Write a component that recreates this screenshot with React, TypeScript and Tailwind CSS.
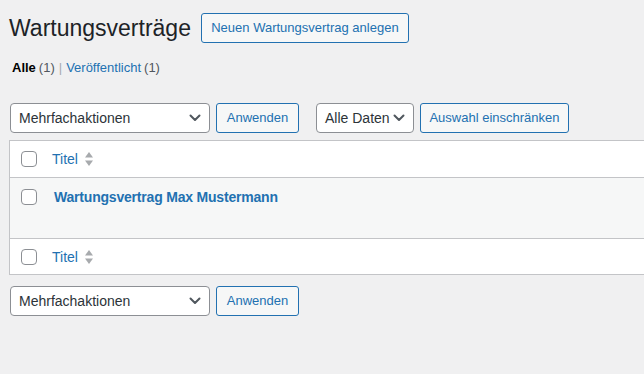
import React from "react";

const font = { fontFamily: '"Liberation Sans", Arial, sans-serif' };

function Chevron() {
  return (
    <svg width="12" height="8" viewBox="0 0 12 8" className="shrink-0">
      <path d="M1.5 1.5 L6 6 L10.5 1.5" fill="none" stroke="#50575e" strokeWidth="2" strokeLinecap="round" strokeLinejoin="round" />
    </svg>
  );
}

function Select({ label, w }: { label: string; w: string }) {
  return (
    <div className={`${w} h-[30px] flex items-center justify-between pl-[8px] pr-[8px] bg-white border border-[#8c8f94] rounded-[4px] text-[14px] text-[#2c3338]`}>
      <span>{label}</span>
      <Chevron />
    </div>
  );
}

function Btn({ label, w }: { label: string; w: string }) {
  return (
    <div className={`${w} h-[30px] flex items-center justify-center bg-[#f6f7f7] border border-[#2271b1] rounded-[3px] text-[13px] text-[#2271b1]`}>
      {label}
    </div>
  );
}

function Checkbox() {
  return <div className="w-[16px] h-[16px] border border-[#8c8f94] rounded-[4px] bg-white shrink-0" />;
}

function SortIcon() {
  return (
    <svg width="10" height="16" viewBox="0 0 10 16" className="ml-[6px]">
      <path d="M5 1 L9 6.5 L1 6.5 Z" fill="#a7aaad" />
      <path d="M5 15 L9 9.5 L1 9.5 Z" fill="#a7aaad" />
    </svg>
  );
}

function HeadRow({ h, border }: { h: string; border: string }) {
  return (
    <div className={`${h} ${border} border-[#c3c4c7] bg-white flex items-start pl-[11px] pt-[10px]`}>
      <Checkbox />
      <div className="ml-[15px] flex items-center h-[16px] text-[14px] text-[#2271b1]">
        <span>Titel</span>
        <SortIcon />
      </div>
    </div>
  );
}

export default function App() {
  return (
    <div className="w-[644px] min-h-[374px] bg-[#f0f0f1] overflow-hidden" style={font}>
      <div className="pl-[9px]">
        <div className="pt-[13px] flex items-center h-[43px]">
          <h1 className="text-[23px] leading-[30px] text-[#1d2327] font-normal self-start">Wartungsverträge</h1>
          <div className="ml-[10px] self-start">
            <Btn label="Neuen Wartungsvertrag anlegen" w="w-[208px]" />
          </div>
        </div>
        <div className="mt-[15px] h-[20px] leading-[20px] text-[13px] text-[#50575e] flex items-center pl-[3px]">
          <span className="text-black font-semibold">Alle</span>
          <span className="ml-[3px]">(1)</span>
          <span className="mx-[4px] text-[#a7aaad]">|</span>
          <span className="text-[#2271b1]">Veröffentlicht</span>
          <span className="ml-[3px] text-[#50575e]">(1)</span>
        </div>
        <div className="mt-[25px] flex items-center pl-[1px]">
          <Select label="Mehrfachaktionen" w="w-[200px]" />
          <div className="ml-[6px]"><Btn label="Anwenden" w="w-[83px]" /></div>
          <div className="ml-[17px]"><Select label="Alle Daten" w="w-[98px]" /></div>
          <div className="ml-[6px]"><Btn label="Auswahl einschränken" w="w-[149px]" /></div>
        </div>
        <div className="mt-[7px] border border-r-0 border-[#c3c4c7]">
          <HeadRow h="h-[37px]" border="border-b" />
          <div className="h-[60px] bg-[#f6f7f7] flex items-start pl-[11px] pt-[11px]">
            <Checkbox />
            <div className="ml-[17px] -mt-[2px] text-[14px] font-bold tracking-[-0.2px] text-[#2271b1] leading-[20px]">
              Wartungsvertrag Max Mustermann
            </div>
          </div>
          <HeadRow h="h-[36px]" border="border-t" />
        </div>
        <div className="mt-[11px] flex items-center pl-[1px]">
          <Select label="Mehrfachaktionen" w="w-[200px]" />
          <div className="ml-[6px]"><Btn label="Anwenden" w="w-[83px]" /></div>
        </div>
      </div>
    </div>
  );
}
